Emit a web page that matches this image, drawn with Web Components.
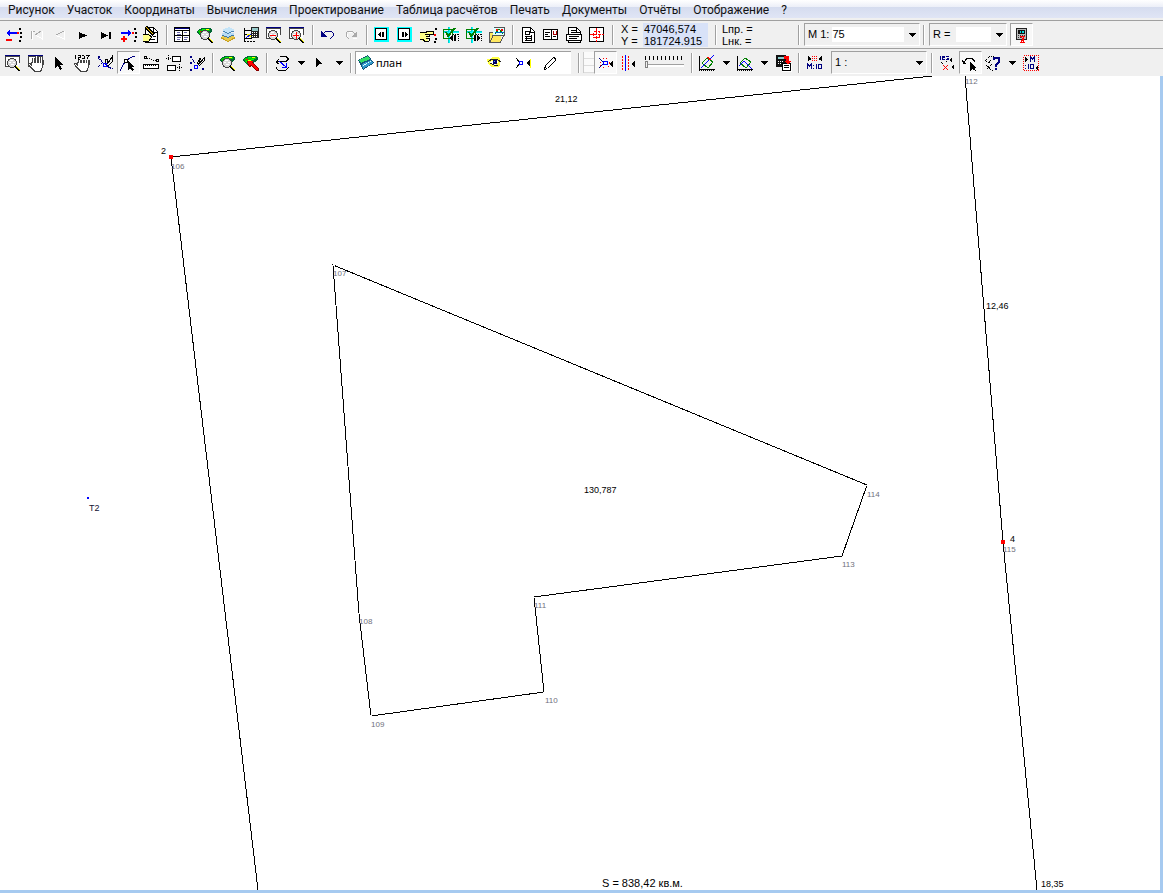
<!DOCTYPE html>
<html lang="ru">
<head>
<meta charset="utf-8">
<meta name="viewport" content="width=device-width, initial-scale=1">
<title>План участка</title>
<style>
  body { margin: 0; background: #fff; font-family: "Liberation Sans", Arial, sans-serif; font-size: 11px; color: #000; }
</style>
</head>
<body>
<cad-app></cad-app>
<script>
const f = (color, d) => `<path fill="${color}" stroke="none" d="${d}"/>`;
const p = (color, d, extra = '') => `<path fill="none" stroke="${color}" d="${d}" ${extra}/>`;
const dash = 'stroke-dasharray="1 1"';
const lens = (x, y) => `<circle cx="${x}" cy="${y}" r="4.500" fill="#d8d8d8" stroke="#444"/>` +
  f('#fff', `M${x - 2} ${y - 3}h3v1h-3zM${x - 3} ${y - 1}h2v1h-2zM${x + 1} ${y - 1}h2v1h-2zM${x - 1} ${y + 1}h3v1h-3z`) +
  p('#000', `M${x + 3} ${y + 3}l5 5`, 'stroke-width="2"') + p('#ff0', `M${x + 4} ${y + 3}l4 4`);
const frame = f('#fff', 'M2 3h13v9H2z') + p('#444', 'M1.500 3v9h3M15.500 3v6') + f('#000080', 'M1 1h15v1H1z') + f('#444', 'M1 2h15v1H1z');
const map3 = f('#063', 'M1 5l5-3h7l3 1v3l-3 2-4 2-4 1-3-3z') + f('#0c0', 'M2 5l5-2h5l3 1-4 2-4 3H4z') +
  f('#0f0', 'M6 3h3v1H6zM9 5h3v1H9zM4 7h2v1H4z') + f('#ff0', 'M10 3h3v1h-3zM6 6h3v1H6z') + f('#f00', 'M4 5h2v1H4z');
const axes = p('#000', 'M1.500 2v14M1 15.500h16') + p('#000', 'M1 16.500h16', dash);
const hand = p('#444', 'M6.500 10V4M9.500 9V2M12.500 9V3M15 11V6M5 14L2 9', 'stroke-width="3"') + f('#444', 'M4 8h12v5l-2 5H7l-3-4z') +
  p('#fff', 'M6.500 11V4M9.500 10V2M12.500 10V3M14.500 11V6M5 13L2 10') + f('#fff', 'M5 9h10v4l-2 4H8l-3-4z');
const dots = f('#000', 'M15 2h2v2h-2zM16 6h2v2h-2zM16 10h2v2h-2zM15 14h2v2h-2z') + f('#f00', 'M13 6h2v2h-2z');
const check = p('#0cc', 'M1 5.500h16M6.500 1v16') + p('#0ff', 'M1 6.500h16M7.500 1v16') + p('#000', 'M11 8.500h6M16.500 8v8', dash) +
  p('#008000', 'M1.500 3.500h9v9h-9z') + p('#008000', 'M4 6l2 4 7-8', 'stroke-width="2"');
const page = f('#fff', 'M3 2h8l4 3v12H3z') + p('#000', 'M3.500 1.500h8l4 4v11h-12zM11.500 2v4h4');
const nav = f('#0ff', 'M1 1h15v15H1z') + f('#fff', 'M3 3h11v11H3z') + p('#000', 'M2.500 2.500h11v11h-11z');
const plots = p('#008000', 'M4 9l5-5 6 4-5 6z') + axes;

const ICONS = {
  remove: f('#00f', 'M2 7l4-3v2h7v2H6v2z') + f('#f00', 'M2 13h6v2H2z') + dots,
  insert: f('#00f', 'M13 7L9 4v2H2v2h7v2z') + f('#f00', 'M4 10h2v2h2v2H6v2H4v-2H2v-2h2z') + dots,
  first: p('#fff', 'M5.500 5v9M15.500 5v8L9 9.500') + p('#aaa', 'M4.500 5v8M6 5.500h2M14 5L8 9'),
  prev: p('#fff', 'M14.500 5v8L6 9.500') + p('#aaa', 'M14 5L6 9'),
  play: f('#000', 'M6 6v7l8-3.500z'),
  last: f('#000', 'M5 6v7l7-3.500zM13 6h2v7h-2z'),
  edit: page + f('#ff8', 'M1 9l6-2 3 4-3 4-6 1z') + p('#000', 'M1 9l5-1 4 3-3 4H1M9 13h4M11 10h3') + p('#000', 'M4 1l8 8', 'stroke-width="3"') + p('#fc0', 'M4 1l7 7'),
  table: f('#fff', 'M2 2h15v14H2z') + f('#000080', 'M2 2h15v1H2z') + p('#000', 'M1.500 1.500h15v14h-15zM2 4.500h15M9.500 4v12M2 9.500h15') + p('#66a', 'M4 6.500h3M11 6.500h3M4 8.500h4M4 11.500h4M4 13.500h3M11 11.500h4M11 13.500h3'),
  mapzoom: map3 + lens(9, 9),
  layers: f('#c9a020', 'M1 12l8-3 8 3-8 4z') + f('#e8c84a', 'M2 11l7-3 7 3-7 4z') + f('#3d78a8', 'M2 9l7-3 7 3-7 3z') + f('#b8dcf4', 'M2 8l7-3 7 3-7 3z') + f('#4c86b4', 'M3 5l7-3 6 3-7 3z') + f('#c4e4f8', 'M3 4l7-3 6 3-7 3z'),
  gridcalc: p('#000', 'M2.500 2v14M2 4.500h8M2 8.500h4M2 12.500h8') + p('#000', 'M2 15.500h12', 'stroke-dasharray="2 1"') + f('#ff0', 'M5 8h4v3H5z') + p('#00f', 'M4 12l5-4') + f('#222', 'M9 1h8v11H9z') + f('#9cc', 'M10 2h6v3h-6z') + f('#fff', 'M10 6h1v1h-1zM12 6h1v1h-1zM14 6h1v1h-1zM10 8h1v1h-1zM12 8h1v1h-1zM14 8h1v1h-1zM10 10h1v1h-1zM12 10h1v1h-1zM14 10h1v1h-1z'),
  zoomout: frame + lens(8, 9) + p('#f00', 'M5 9.500h6'),
  zoomin: frame + lens(8, 9) + p('#f00', 'M5 9.500h6M8.500 6v7'),
  undo: f('#000080', 'M2 5v6h6z') + p('#000080', 'M4 8l3-3h5l2 2v3l-3 3'),
  redo: f('#aaa', 'M15 5v6H9z') + p('#aaa', 'M13 8l-3-3H6L4 7v3l3 3') + p('#fff', 'M7 6h3M5 8v3M15 12h-4'),
  navl: nav + f('#000', 'M8 6v5L5 8.500zM9 6h2v5H9z'),
  navr: nav + f('#000', 'M9 6v5l3-2.500zM6 6h2v5H6z'),
  point: f('#ff8', 'M1 7h5l1-1h7v3h-5v6H4l-3-2z') + p('#000', 'M1 6.500h5l3-1h5v3H9M1 13.500h3l2 2h4M6 8.500h4v2H7M7 12.500h3M10 12v3') + f('#000', 'M16 2h2v2h-2zM16 12h2v2h-2zM15 15h2v2h-2z') + f('#f00', 'M15 8h2v2h-2z'),
  checkl: check + f('#000', 'M11 9v6l-4-3zM12 9h2v6h-2z'),
  checkr: check + f('#000', 'M12 9v6l4-3zM9 9h2v6H9z'),
  folder: f('#ffe860', 'M1 6h12v10H2z') + f('#dff', 'M5 1h12v9H5z') + p('#555', 'M5.500 1.500h11v8M1.500 16.500V6.500h3M2 16.500h10l4-7H5l-3 7') + p('#080', 'M7 8l4-5 4 5') + f('#f00', 'M8 3h2v2H8zM13 3h2v2h-2z') + p('#06c', 'M7 6h9'),
  doc1: page + p('#000', 'M6 5.500h4v3H6zM7 10v5M6 10.500h7M6 12.500h7M6 14.500h7M12.500 9v6'),
  book: f('#fff', 'M2 4h14v10H2z') + p('#000', 'M1.500 3.500h14v10h-14zM9.500 3v11M3 6.500h5M3 8.500h3M3 10.500h5M11 10.500h3') + p('#a00', 'M11.500 5v3h3V5'),
  doc2: page + f('#fff', 'M2 9h14v6H2z') + p('#000', 'M1.500 8.500h15v6h-15zM4 10.500h10M4 12.500h8M6 4.500h5M6 6.500h8M4 16.500h12'),
  target: f('#fff', 'M2 2h14v14H2z') + p('#000', 'M1.500 1.500h14v14h-14z') + p('#f00', 'M8.500 2v14M2 8.500h14M5.500 5.500h6v6h-6z', 'stroke-dasharray="3 1"'),
  calc: '<g transform="translate(2 1)">' + f('#222', 'M2 1h11v12H2z') + f('#bbb', 'M3 2h9v10H3z') + f('#111', 'M4 3h7v4H4z') + f('#0dd', 'M6 4h1v2H6zM8 4h2v2H8z') + f('#333', 'M4 8h1v1H4zM6 8h1v1H6zM8 8h1v1H8zM10 8h1v1h-1zM4 10h1v1H4zM6 10h1v1H6z') + p('#f00', 'M6 9.500h5M6 15.500h5M7 10l2 2-2 3M9 10v6') + '</g>',

  zoomwin: frame + lens(8, 9),
  pan: frame + hand,
  cursor: f('#000', 'M5 3v11l3-2 2 4 2-1-2-4h3z'),
  hand123: hand + f('#f0f0f0', 'M0 0h18v6H0z') + p('#000', 'M2.500 1v4M5 1.500h2v2H5v2h2M9 1.500h2M9 4.500h2V2M13 1.500h3L14 5'),
  measure: p('#000080', 'M2 13l5-5 4 4 6 3M2 4l14 12', dash) + p('#000', 'M9 9l1-4h2l-1 5M12 9l4-6v5l-4 4') + p('#00f', 'M7.500 9.500h3v3h-3z') + f('#000080', 'M2 2h2v2H2z'),
  arc: p('#000080', 'M1 17Q6 4 16 2') + f('#fff', 'M6 6h3v3H6z') + p('#000', 'M5.500 5.500h3v3h-3z') + f('#000', 'M9 7v9l2-2 2 3 2-1-2-3h3z'),
  ruler: p('#000', 'M2.500 2.500h2v2h-2zM14.500 5.500h2v2h-2z') + p('#000', 'M5 4l9 3', dash) + f('#fff', 'M1 11h16v3H1z') + p('#000', 'M1.500 10.500h15v4h-15z') + p('#000', 'M3 11.500h12', dash),
  rects: f('#fff', 'M7 3h9v5H7zM2 11h9v5H2z') + p('#000', 'M7.500 2.500h8v5h-8zM2.500 11.500h8v5h-8z') + p('#000', 'M3 1v6M1 4.500h5M14 10v7M12 13.500h5', dash),
  snap: f('#000080', 'M2 2h2v2H2zM2 8h2v2H2zM2 15h2v2H2zM14 14h2v2h-2z') + p('#000', 'M9 10l3-6h1l-3 7M11 10l5-6v3l-5 5') + p('#000080', 'M4 5l4 5', dash) + p('#00f', 'M6.500 11.500h3v3h-3z'),
  maplens: map3 + lens(8, 9),
  mappick: map3 + f('#800', 'M5 7h6v2l6 6v2h-2l-6-5v1H7z') + f('#f00', 'M6 7h5l-1 2 6 6-1 2-6-6-2 1z'),
  rotate: p('#000', 'M7 2.500h6l2 2v1l-2 2H3M6 5L3 8l3 2M3 13v1l2 2h8l2-2v-1') + p('#00f', 'M6 7l7 6M13 9v4H9'),
  dart: f('#000', 'M5 4v9l3-3h4z'),
  layer: f('#157', 'M1 6l10-5 6 8-11 7z') + f('#3d6', 'M2 6l9-4 2 3-9 4z') + f('#39c', 'M5 10l9-4 2 3-10 6z') + p('#dff', 'M6 12l8-5', dash),
  eye: f('#ff4', 'M2 5h3l2-2h6l2 2v6l-2 2H6l-3-3z') + f('#fff', 'M4 9l5-3 5 2-4 3z') + p('#222', 'M3 8l4-3h5l4 3M5 9l4 2h4') + f('#006', 'M8 6h4v4H8z') + f('#49f', 'M9 7h1v1H9z'),
  vertex: p('#000', 'M3 4l4 5-4 5') + p('#00f', 'M6.500 7.500h3v3h-3z') + f('#ff0', 'M17 5h1v9h-1z') + f('#000', 'M17 5v8l-4-4z'),
  pencil: f('#fff', 'M4 12l8-8 3 2-8 8z') + p('#000', 'M3.500 15.500l1-4 8-8 2 1v2l-8 8z'),
  node: p('#000080', 'M3 4l5 5-5 5') + '<circle cx="9" cy="9" r="5" fill="none" stroke="#f00" stroke-dasharray="1 2"/>' + p('#00f', 'M7.500 7.500h4v3h-4z') + f('#000', 'M17 6v7l-4-3z'),
  mirror: f('#f00', [2, 5, 8, 11, 14].map(y => `M3 ${y}h1v2H3zM9 ${y}h1v2H9z`).join('')) + f('#00f', 'M6 1h1v16H6z') + f('#000', 'M16 6v7l-4-3z'),
  plotedge: plots + p('#00f', 'M3 14L16 1') + p('#f00', 'M9 3l4 3'),
  plots: plots + p('#00f', 'M3 12l5-5 8 8'),
  calcdoc: f('#111', 'M2 1h10v12H2z') + f('#8cc', 'M4 3h6v2H4z') + f('#fff', 'M4 7h1v1H4zM6 7h1v1H6zM8 7h1v1H8zM4 9h1v1H4zM6 9h1v1H6z') + f('#fff', 'M8 10h10v8H8z') + p('#000', 'M8.500 9.500h8v7h-8zM10 11.500h5M10 13.500h5') + f('#f00', 'M10 2h4l1 1v4h2l-3 4-3-4h1V5h-2z'),
  scale: f('#000', 'M3 2v5l4-2zM17 2v5l-4-2z') + p('#f00', 'M7 4.500h6M7 2.500h6M7 6.500h6', dash) + p('#000080', 'M2.500 15v-5l2 2 2-2v5M8 11.500h1M8 14.500h1M11.500 10v5M13.500 10.500h3v4h-3z'),
  deldim: p('#000080', 'M2.500 2v4M4 2.500h2v1H4v2h3M8 2.500h3M8 5.500h3M9 4.500h2') + p('#000', 'M3 8l2 2M8 8l1-1', dash) + f('#000', 'M14 4v5l-3-3zM16 10v6l-3-3z') + p('#f00', 'M5 11l5 5M10 11l-5 5'),
  turn: p('#000', 'M3 9l3-5h5l3 4') + f('#000', 'M1 6l5 4H2zM9 8v9l2-2 4 2-1-3h2z'),
  help: p('#000', 'M1 7l5-5h4l-5 7zM2 11l7 6M3 15l6-6', dash) + p('#000080', 'M10 6V4h5v4l-3 3v2', 'stroke-width="2"') + f('#000080', 'M11 14h2v2h-2z'),
  mscale: p('#f00', 'M1.500 1.500h15v15h-15z', dash) + f('#000', 'M3 3v5l3-2zM16 11v5l-3-2z') + p('#000080', 'M8.500 8V3l2 2 2-2v5M3 11.500h1M3 14.500h1M6.500 10v5M8.500 10.500h3v4h-3z')
};
const icon = name => `<svg width="18" height="18" viewBox="0 0 18 18" shape-rendering="crispEdges" aria-hidden="true">${ICONS[name]}</svg>`;
const arrow = '<svg width="7" height="4" viewBox="0 0 7 4" shape-rendering="crispEdges" aria-hidden="true"><path d="M0 0h7L3.500 4z"/></svg>';

function define(name, render) {
  customElements.define(name, class extends HTMLElement {
    connectedCallback() {
      if (this.shadowRoot) return;
      const t = document.createElement('template');
      t.innerHTML = render(this);
      this.attachShadow({ mode: 'open' }).append(t.content.cloneNode(true));
    }
  });
}

define('menu-bar', () => `<style>
  :host { display: block; flex: none; }
  nav { display: flex; height: 20px; padding-left: 2px; overflow: hidden; background: linear-gradient(#fff 0, #eceff8 7px, #d5dcef 7px, #e0e5f5 18px, #f0f0f0 18px); }
</style><nav aria-label="Меню"><slot></slot></nav>`);

define('menu-item', () => `<style>
  :host { display: block; }
  button { display: block; height: 20px; margin: 0; padding: 0 6px; border: 0; background: none; color: #111; font: 12px/20px Roboto, "Noto Sans", sans-serif; white-space: nowrap; }
</style><button type="button"><slot></slot></button>`);

define('tool-bar', () => `<style>
  :host { display: flex; flex: none; align-items: center; box-sizing: border-box; height: 28px; padding-left: 2px; border-top: 1px solid #a0a0a0; background: #f0f0f0; overflow: hidden; }
</style><slot></slot>`);

define('tool-sep', () => `<style>
  :host { display: block; flex: none; width: 8px; height: 20px; }
  i { display: block; width: 1px; height: 20px; margin-left: 3px; background: #a0a0a0; border-right: 1px solid #fff; }
</style><i></i>`);

define('tool-button', el => `<style>
  :host { display: block; flex: none; }
  button { display: block; box-sizing: border-box; width: 23px; height: 23px; margin: 0; padding: 3px 3px 2px 2px; border: 0; background: none; }
  button[aria-pressed=true] { padding: 2px 2px 1px 1px; border: 1px solid; border-color: #a0a0a0 #fff #fff #a0a0a0; background: #f8f8f8; }
  svg { display: block; }
</style><button type="button" aria-label="${el.getAttribute('label')}" ${el.hasAttribute('pressed') ? 'aria-pressed="true"' : ''}>${icon(el.getAttribute('icon'))}</button>`);

define('drop-arrow', () => `<style>
  :host { display: block; flex: none; }
  button { display: grid; place-items: center; width: 15px; height: 23px; margin: 0; padding: 0; border: 0; background: none; }
</style><button type="button" aria-label="Открыть список">${arrow}</button>`);

define('combo-field', el => `<style>
  :host { display: block; flex: none; margin-left: 1px; }
  .box { display: flex; align-items: center; position: relative; box-sizing: border-box; height: 23px; padding-left: 3px; border: 1px solid; border-color: #a0a0a0 #fff #fff #a0a0a0; }
  label { flex: none; white-space: pre; font-size: 11px; line-height: 15px; }
  select { flex: 1; min-width: 0; height: 15px; margin: 0 15px 0 3px; padding: 0; border: 0; border-radius: 0; appearance: none; background: ${el.hasAttribute('plain') ? 'none' : '#fff'}; color: #000; font: 11px/15px "Liberation Sans", Arial, sans-serif; }
  svg { position: absolute; right: 3px; top: 9px; pointer-events: none; }
</style><div class="box"><label for="v">${el.getAttribute('label')}</label><select id="v"><option>${el.getAttribute('value') || ''}</option></select>${arrow}</div>`);

define('coord-readout', () => `<style>
  :host { display: block; flex: none; margin: 0 4px; }
  dl { display: grid; grid-template-columns: 22px 65px; margin: 0; font-size: 11px; line-height: 12px; white-space: nowrap; }
  dd { margin: 0; padding-left: 1px; background: #d8e2f8; }
</style><dl><dt>X =</dt><dd>47046,574</dd><dt>Y =</dt><dd>181724.915</dd></dl>`);

define('line-readout', () => `<style>
  :host { display: block; flex: none; width: 73px; margin-left: 2px; font-size: 11px; line-height: 12px; }
</style><div>Lпр. =</div><div>Lнк. =</div>`);

define('tick-slider', () => `<style>
  :host { display: flex; flex-direction: column; flex: none; box-sizing: border-box; width: 48px; padding: 0 4px 0 5px; }
  i { height: 4px; background: repeating-linear-gradient(90deg, #000 0 1px, transparent 1px 4px); }
  input { appearance: none; width: 39px; height: 10px; margin: 0; background: linear-gradient(#a0a0a0, #a0a0a0) 0 4px / 100% 1px no-repeat, linear-gradient(#fff, #fff) 0 5px / 100% 2px no-repeat; }
  input::-webkit-slider-thumb { appearance: none; width: 3px; height: 7px; border: 1px solid #808080; background: #f0f0f0; box-sizing: border-box; }
</style><i></i><input type="range" value="0" aria-label="Размер">`);

define('tool-grip', () => `<style>
  :host { display: block; flex: none; box-sizing: border-box; width: 11px; height: 21px; border-left: 1px solid #ccc; background: repeating-linear-gradient(#fafafa 0 6px, #ddd 6px 7px); }
</style>`);

define('layer-picker', () => `<style>
  :host { display: flex; flex: none; align-items: center; box-sizing: border-box; width: 216px; height: 23px; margin-right: 4px; padding-left: 1px; border: solid #a0a0a0; border-width: 1px 0 0 1px; background: #fff; }
  button { display: flex; align-items: center; gap: 1px; margin: 0; padding: 0; border: 0; background: none; color: #000; font: 11px/18px "Noto Sans", sans-serif; }
  .name { flex: 1; }
  .tools { display: flex; gap: 10px; padding-right: 12px; }
  svg { display: block; }
</style><button type="button" class="name">${icon('layer')}<span>план</span></button>
<div class="tools"><button type="button" aria-label="Видимость">${icon('eye')}</button><button type="button" aria-label="Привязка">${icon('vertex')}</button><button type="button" aria-label="Правка">${icon('pencil')}</button></div>`);

define('plan-canvas', () => {
  const t = (x, y, s, c = '') => `<text x="${x}" y="${y}" class="${c}">${s}</text>`;
  return `<style>
  :host { display: block; flex: 1; min-height: 0; border: solid #a6caf0; border-width: 0 3px 3px 0; overflow: hidden; }
  svg { display: block; width: 100%; height: 100%; }
  text { font-size: 9px; fill: #000; }
  .id { font-size: 8px; fill: #70707c; }
  .area { font-size: 11px; }
  .mark { fill: #113; }
  .line { fill: none; stroke: #000; shape-rendering: crispEdges; }
</style><svg viewBox="0 76 1160 814" preserveAspectRatio="xMinYMin slice" role="img" aria-label="План участка">
  <path class="line" d="M932 76L171 157L258 890M965 76L1003 542L1037 890"/>
  <path class="line" d="M333 265L867 485L842 556L534 597L544 692L371 716L359 614z"/>
  <path fill="#fff" shape-rendering="crispEdges" d="M333 265h2v1h-2zM866 485h2v1h-2zM842 556h2v1h-2zM533 597h2v1h-2zM543 692h2v1h-2zM370 715h2v1h-2zM358 613h2v1h-2z"/>
  ${t(965, 84, '112', 'id')}${t(171, 169, '106', 'id')}${t(333, 276, '107', 'id')}${t(867, 497, '114', 'id')}${t(842, 567, '113', 'id')}
  ${t(534, 608, '111', 'id')}${t(545, 703, '110', 'id')}${t(371, 727, '109', 'id')}${t(359, 624, '108', 'id')}${t(1003, 552, '115', 'id')}
  <path fill="#f00" shape-rendering="crispEdges" d="M169 155h4v4h-4zM1001 540h4v4h-4z"/>
  <path fill="#00f" shape-rendering="crispEdges" d="M87 497h2v2h-2z"/>
  ${t(161, 154, '2')}${t(1010, 542, '4')}${t(89, 511, 'T2', 'mark')}
  ${t(555, 102, '21,12')}${t(986, 309, '12,46')}${t(584, 493, '130,787')}${t(1041, 887, '18,35')}${t(602, 887, 'S = 838,42 кв.м.', 'area')}
</svg>`;
});

define('cad-app', () => {
  const b = (name, label, pressed) => `<tool-button icon="${name}" label="${label}"${pressed ? ' pressed' : ''}></tool-button>`;
  const sep = '<tool-sep></tool-sep>', drop = '<drop-arrow></drop-arrow>';
  const menus = ['Рисунок', 'Участок', 'Координаты', 'Вычисления', 'Проектирование', 'Таблица расчётов', 'Печать', 'Документы', 'Отчёты', 'Отображение', '?'];
  return `<style>
  :host { display: flex; flex-direction: column; box-sizing: border-box; height: 100vh; padding-bottom: 1px; }
  .scale { width: 116px; }
  .radius { width: 78px; margin-right: 3px; }
  .ratio { width: 96px; margin: 0 1px 0 5px; }
</style>
<menu-bar>${menus.map(m => `<menu-item>${m}</menu-item>`).join('')}</menu-bar>
<tool-bar>
  ${b('remove', 'Удалить точку')}${b('first', 'Первая')}${b('prev', 'Назад')}${b('play', 'Вперёд')}${b('last', 'Последняя')}${b('insert', 'Вставить точку')}${b('edit', 'Правка')}${sep}
  ${b('table', 'Таблица')}${b('mapzoom', 'Обзор')}${b('layers', 'Слои')}${b('gridcalc', 'Сетка')}${b('zoomout', 'Уменьшить')}${b('zoomin', 'Увеличить')}${sep}
  ${b('undo', 'Отменить')}${b('redo', 'Повторить')}${sep}
  ${b('navl', 'Предыдущий участок')}${b('navr', 'Следующий участок')}${b('point', 'Указать')}${b('checkl', 'Проверить назад')}${b('checkr', 'Проверить вперёд')}${b('folder', 'Открыть')}${sep}
  ${b('doc1', 'План')}${b('book', 'Каталог')}${b('doc2', 'Ведомость')}${b('target', 'Центр')}${sep}
  <coord-readout></coord-readout>${sep}<line-readout></line-readout>${sep}
  <combo-field class="scale" label="M 1:" value="75"></combo-field>${sep}
  <combo-field class="radius" label="R = "></combo-field>${b('calc', 'Калькулятор', true)}
</tool-bar>
<tool-bar>
  ${b('zoomwin', 'Лупа')}${b('pan', 'Сдвиг')}${b('cursor', 'Выбор')}${b('hand123', 'Номера')}${b('measure', 'Построение')}${b('arc', 'Узел', true)}${b('ruler', 'Линейка')}${b('rects', 'Фигуры')}${b('snap', 'Привязка')}${sep}
  ${b('maplens', 'Карта')}${b('mappick', 'Выбор на карте')}${sep}
  ${b('rotate', 'Поворот')}${drop}${b('dart', 'Указатель')}${drop}${sep}
  <layer-picker></layer-picker>${sep}<tool-grip></tool-grip>
  ${b('node', 'Узлы', true)}${b('mirror', 'Отражение')}<tick-slider></tick-slider>${sep}
  ${b('plotedge', 'Граница')}${drop}${b('plots', 'Контур')}${drop}${b('calcdoc', 'Расчёт')}${sep}
  ${b('scale', 'Масштаб')}<combo-field class="ratio" label="1 :" plain></combo-field>${sep}
  ${b('deldim', 'Удалить размер')}${b('turn', 'Вращать', true)}${b('help', 'Справка')}${drop}${b('mscale', 'Масштаб 1:10')}
</tool-bar>
<plan-canvas></plan-canvas>`;
});
</script>
</body>
</html>
